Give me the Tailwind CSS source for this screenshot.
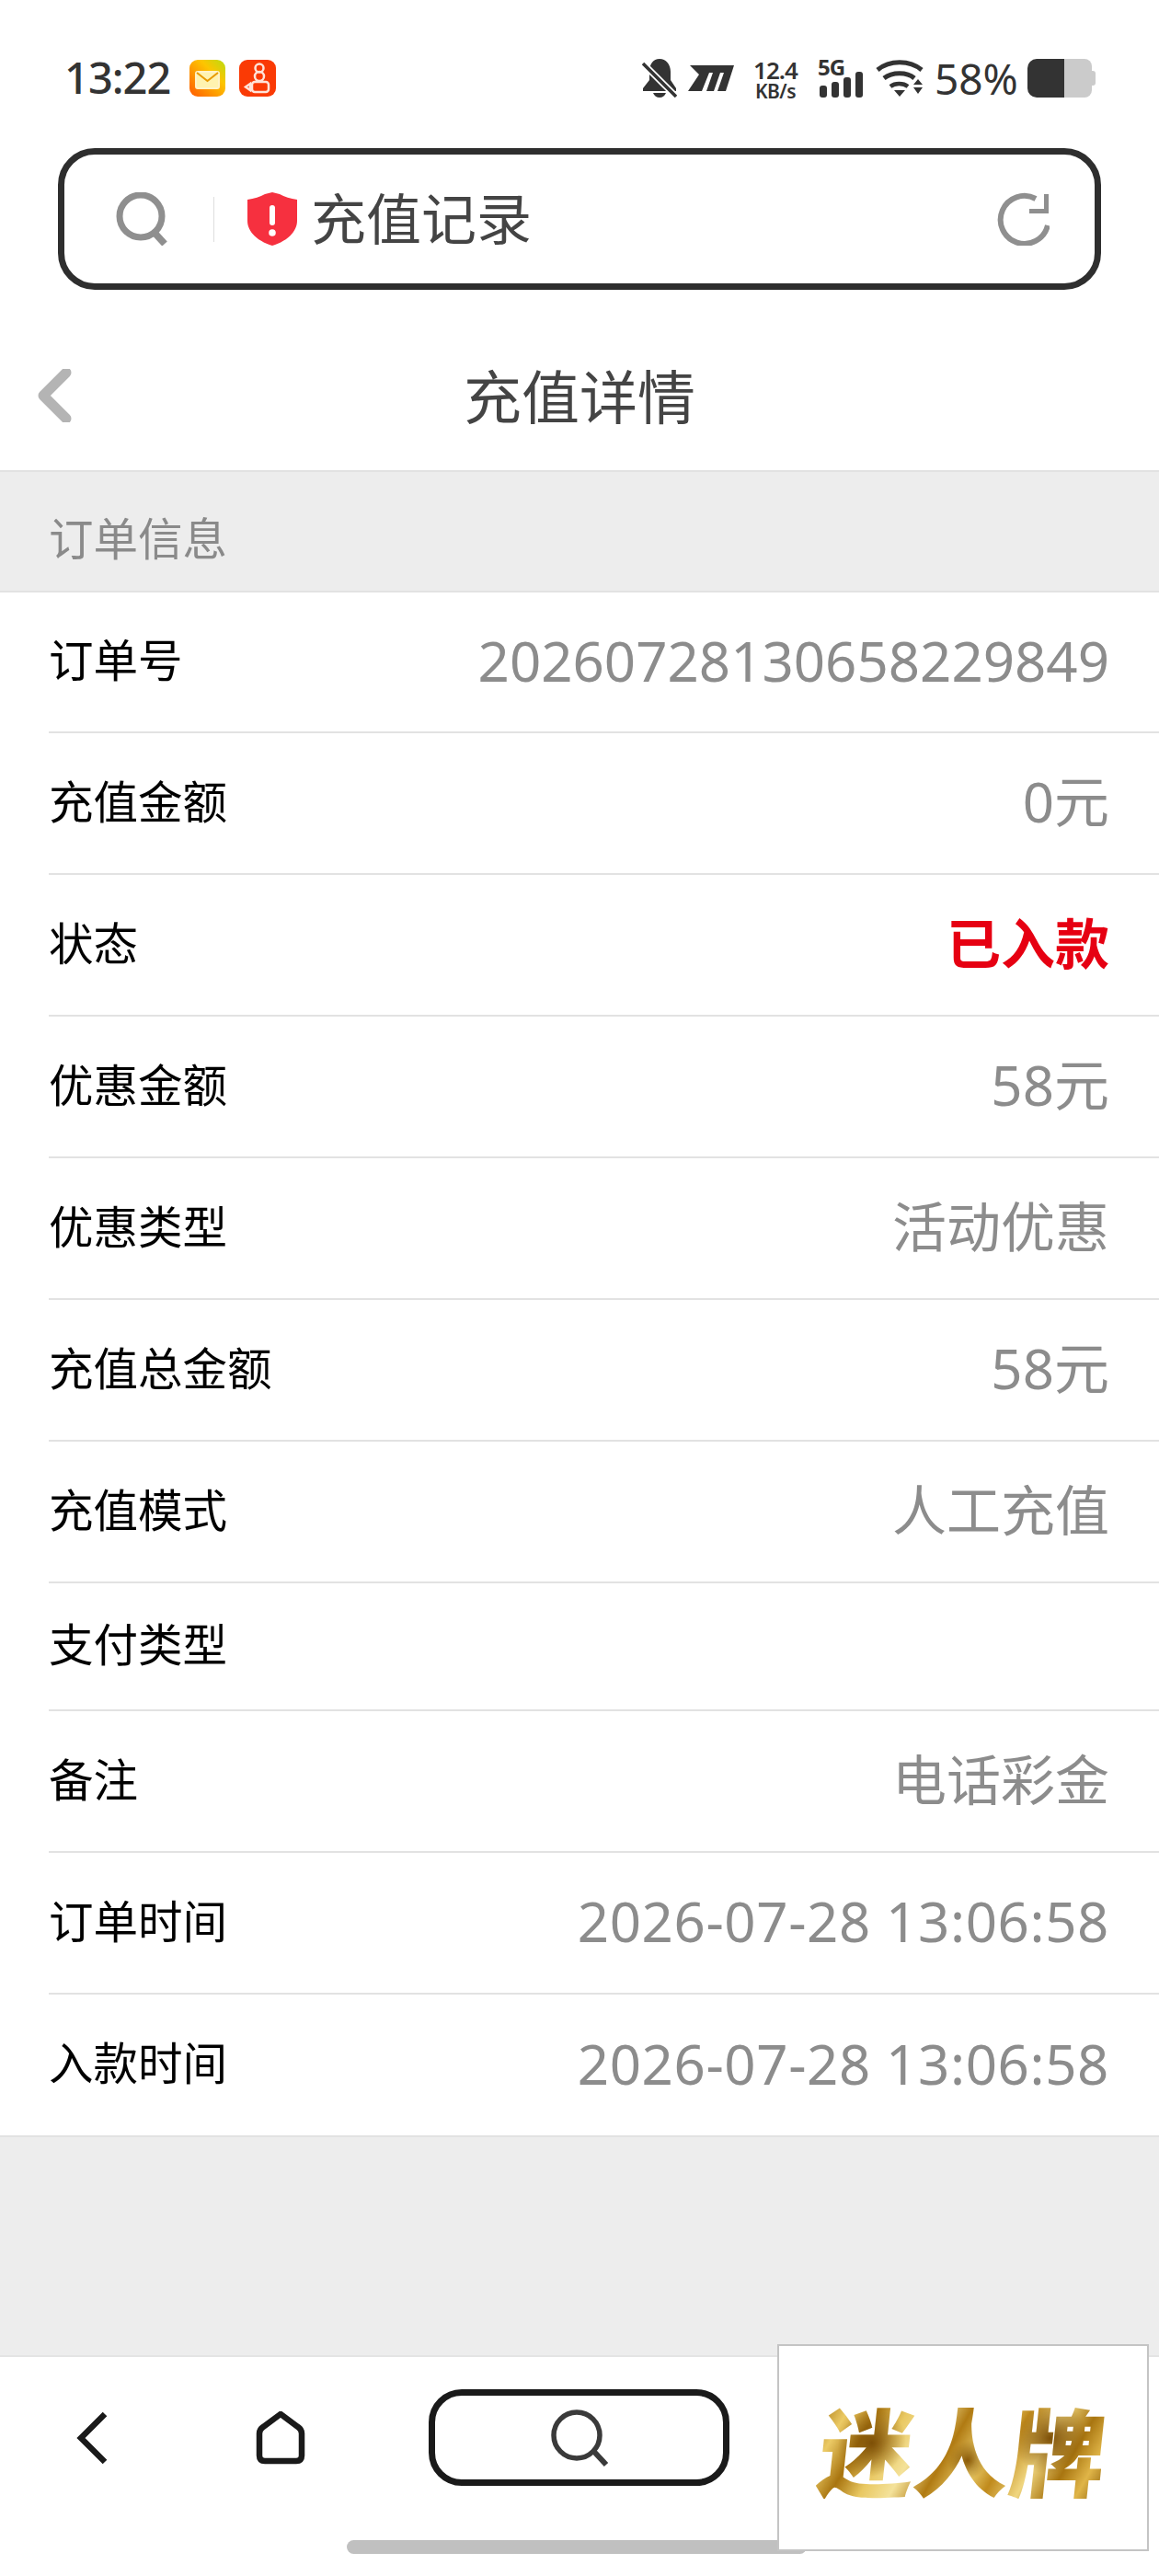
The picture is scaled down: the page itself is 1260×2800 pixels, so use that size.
<!DOCTYPE html>
<html lang="zh-CN">
<head>
    <meta charset="UTF-8">
    <meta name="viewport" content="width=device-width, initial-scale=1.0">
    <title>充值详情</title>
    <script src="https://cdn.jsdelivr.net/npm/@tailwindcss/browser@4"></script>
</head>
<body class="bg-white font-['Noto_Sans','Noto_Sans_CJK_SC',sans-serif]">
<div class="w-[1260px] h-[2800px] flex flex-col relative overflow-hidden">

    <!-- 状态栏 -->
    <div class="h-[161px] shrink-0 pt-[64px] pl-[70px] flex items-start text-[#333333]">
        <span class="text-[47px] leading-[40px] w-[115px] tracking-[-1px] font-medium whitespace-nowrap">13:22</span>
        <svg class="ml-[21px] mt-px" width="39" height="40" viewBox="0 0 39 40">
            <defs><linearGradient id="mail" x1="1" y1="0" x2="0" y2="1"><stop offset="0" stop-color="#b9dc12"/><stop offset=".35" stop-color="#fdc500"/><stop offset="1" stop-color="#ff5a00"/></linearGradient></defs>
            <rect width="39" height="40" rx="9" fill="url(#mail)"/>
            <rect x="7" y="13" width="25" height="18" rx="2" fill="#fff3b0" stroke="#fff3c8" stroke-width="2"/>
            <path d="M8 14l11.500 9L31 14" fill="none" stroke="#e89a00" stroke-width="2"/>
        </svg>
        <svg class="ml-[15px] mt-px" width="40" height="40" viewBox="0 0 40 40">
            <rect width="40" height="40" rx="9" fill="#fa3a05"/>
            <circle cx="22" cy="9" r="4.500" fill="none" stroke="#ffe3d8" stroke-width="2.500"/>
            <circle cx="22" cy="18" r="5" fill="none" stroke="#ffe3d8" stroke-width="2.500"/>
            <rect x="14" y="24" width="18" height="11" rx="3" fill="none" stroke="#ffe3d8" stroke-width="2.500"/>
            <path d="M12 26l-5 3.500 5 3.500z" fill="none" stroke="#ffe3d8" stroke-width="2.500"/>
        </svg>

        <svg class="ml-[398px]" width="38" height="42" viewBox="0 0 38 42">
            <path d="M19 0c-7 0-11 6-11 14v9L1 32v3h36v-3l-6-9V14C31 6 26 0 19 0z" fill="#333"/>
            <path d="M12 37h14c-1 3-4 5-7 5s-6-2-7-5z" fill="#333"/>
            <path d="M0 4l36 36" stroke="#fff" stroke-width="7"/>
            <path d="M1 5l36 36" stroke="#333" stroke-width="3.500"/>
        </svg>
        <svg class="ml-[12px] mt-[7px]" width="50" height="28" viewBox="0 0 50 28">
            <path d="M2 0h48l-9 28h-9l7-20h-4l-7 20h-8l7-20h-4l-8 20H0l12-18z" fill="#333"/>
        </svg>
        <div class="ml-[20px] w-[50px] flex flex-col items-center font-semibold whitespace-nowrap">
            <span class="text-[26px] leading-[24px] tracking-[-1px]">12.4</span>
            <span class="text-[21px] leading-[20px] mt-[1px] tracking-[-0.5px]">KB/s</span>
        </div>
        <div class="ml-[21px] w-[50px] h-[42px] relative">
            <span class="absolute left-0 top-[-3px] text-[24px] leading-[24px] font-bold tracking-[-1px]">5G</span>
            <svg class="absolute left-[2px] top-[14px]" width="47" height="28" viewBox="0 0 47 28">
                <rect x="0" y="15" width="8" height="13" rx="3" fill="#333"/>
                <rect x="13" y="11" width="8" height="17" rx="3" fill="#333"/>
                <rect x="26" y="6" width="8" height="22" rx="3" fill="#333"/>
                <rect x="39" y="0" width="8" height="28" rx="3" fill="#333"/>
            </svg>
        </div>
        <svg class="ml-[13px]" width="52" height="42" viewBox="0 0 52 42">
            <path d="M2 12C15 1 37 1 50 12" fill="none" stroke="#333" stroke-width="5"/>
            <path d="M9 21c9-7 25-7 33 0" fill="none" stroke="#333" stroke-width="5"/>
            <path d="M16 30c5-4 14-4 19 0" fill="none" stroke="#333" stroke-width="4.500"/>
            <path d="M20 34h12l-6 7zM41 28l5-6 5 6zM41 31h10l-5 7z" fill="#333"/>
        </svg>
        <span class="ml-[12px] w-[89px] text-[46px] leading-[42px] whitespace-nowrap">58%</span>
        <div class="ml-[12px] h-[42px] flex items-center">
            <div class="w-[40px] h-full bg-[#333333] rounded-l-[10px]"></div>
            <div class="w-[30px] h-full bg-[#cbcbcb] rounded-r-[8px]"></div>
            <div class="w-[4px] h-[16px] bg-[#cbcbcb] rounded-r-[3px]"></div>
        </div>
    </div>

    <!-- 地址栏 -->
    <div class="h-[154px] shrink-0 mx-[63px] border-[7px] border-[#2e2e2e] rounded-[40px] flex items-center pl-[55px] pr-[48px]">
        <svg width="58" height="58" viewBox="0 0 58 58">
            <circle cx="28" cy="26" r="23" fill="none" stroke="#8f8f8f" stroke-width="7"/>
            <path d="M43 44l11 12" stroke="#8f8f8f" stroke-width="7.500"/>
        </svg>
        <div class="ml-[49px] w-[1px] h-[49px] bg-[#dfdfdf]"></div>
        <svg class="ml-[36px]" width="54" height="58" viewBox="0 0 54 58">
            <path d="M27 0l8 2c5 3 12 5 19 6v23c0 13-13 23-27 27C13 54 0 44 0 31V8c7-1 14-3 19-6z" fill="#f6303f"/>
            <rect x="24" y="14" width="6" height="22" rx="3" fill="#fff"/>
            <circle cx="27" cy="44" r="3.800" fill="#fff"/>
        </svg>
        <span class="ml-[15px] text-[60px] leading-[58px] text-[#444444] whitespace-nowrap">充值记录</span>
        <svg class="ml-auto mr-[1px]" width="58" height="58" viewBox="0 0 58 58">
            <path d="M56 36A26 26 0 1 1 43 7" fill="none" stroke="#8f8f8f" stroke-width="6"/>
            <path d="M57 2v21H36v-5h16V2z" fill="#8f8f8f"/>
        </svg>
    </div>

    <!-- 标题栏 -->
    <div class="h-[196px] shrink-0 flex items-center relative">
        <svg class="absolute left-[40px] top-[86px]" width="38" height="58" viewBox="0 0 38 58">
            <path d="M32 4L7 29l25 25" fill="none" stroke="#b4b4b4" stroke-width="11" stroke-linejoin="round" stroke-linecap="round"/>
        </svg>
        <h1 class="w-full pt-[35px] text-center text-[63px] leading-[70px] text-[#444444]">充值详情</h1>
    </div>

    <!-- 订单信息 -->
    <div class="h-[133px] shrink-0 bg-[#ededed] border-y-2 border-[#e2e2e2] pl-[53px] pt-[42px] text-[48.500px] leading-[60px] text-[#8a8a8a]">订单信息</div>

    <!-- 明细 -->
    <div class="shrink-0 pl-[53px] text-[48.500px] text-black border-b-2 border-[#e2e2e2]">
        <div class="h-[153px] pb-[4px] flex items-center justify-between pr-[54px] border-b-2 border-[#e2e2e2]">
            <span>订单号</span>
            <span class="text-[60px] text-[#8c8c8c]">20260728130658229849</span>
        </div>
        <div class="h-[154px] pb-[4px] flex items-center justify-between pr-[54px] border-b-2 border-[#e2e2e2]">
            <span>充值金额</span>
            <span class="text-[60px] text-[#8c8c8c]">0元</span>
        </div>
        <div class="h-[154px] pb-[4px] flex items-center justify-between pr-[54px] border-b-2 border-[#e2e2e2]">
            <span>状态</span>
            <span class="text-[59px] font-bold text-[#e60012]">已入款</span>
        </div>
        <div class="h-[154px] pb-[4px] flex items-center justify-between pr-[54px] border-b-2 border-[#e2e2e2]">
            <span>优惠金额</span>
            <span class="text-[60px] text-[#8c8c8c]">58元</span>
        </div>
        <div class="h-[154px] pb-[4px] flex items-center justify-between pr-[54px] border-b-2 border-[#e2e2e2]">
            <span>优惠类型</span>
            <span class="text-[59px] text-[#8c8c8c]">活动优惠</span>
        </div>
        <div class="h-[154px] pb-[4px] flex items-center justify-between pr-[54px] border-b-2 border-[#e2e2e2]">
            <span>充值总金额</span>
            <span class="text-[60px] text-[#8c8c8c]">58元</span>
        </div>
        <div class="h-[154px] pb-[4px] flex items-center justify-between pr-[54px] border-b-2 border-[#e2e2e2]">
            <span>充值模式</span>
            <span class="text-[59px] text-[#8c8c8c]">人工充值</span>
        </div>
        <div class="h-[139px] pb-[4px] flex items-center justify-between pr-[54px] border-b-2 border-[#e2e2e2]">
            <span>支付类型</span>
        </div>
        <div class="h-[154px] pb-[4px] flex items-center justify-between pr-[54px] border-b-2 border-[#e2e2e2]">
            <span>备注</span>
            <span class="text-[59px] text-[#8c8c8c]">电话彩金</span>
        </div>
        <div class="h-[154px] pb-[4px] flex items-center justify-between pr-[54px] border-b-2 border-[#e2e2e2]">
            <span>订单时间</span>
            <span class="text-[60px] text-[#8c8c8c] tracking-[0.6px]">2026-07-28 13:06:58</span>
        </div>
        <div class="h-[153px] pb-[4px] flex items-center justify-between pr-[54px]">
            <span>入款时间</span>
            <span class="text-[60px] text-[#8c8c8c] tracking-[0.6px]">2026-07-28 13:06:58</span>
        </div>
    </div>

    <div class="flex-1 bg-[#ededed] border-b-2 border-[#e4e4e4]"></div>

    <!-- 底部导航 -->
    <div class="h-[238px] shrink-0 relative">
        <div class="flex items-center pt-[35px] pl-[83px]">
            <svg width="34" height="58" viewBox="0 0 34 58">
                <path d="M31 3L5 29l26 26" fill="none" stroke="#1a1a1a" stroke-width="6.500"/>
            </svg>
            <svg class="ml-[160px]" width="56" height="58" viewBox="0 0 56 58">
                <path d="M28 3L9 17c-3 2-4 4-4 7v24c0 4 2 6 6 6h34c4 0 6-2 6-6V24c0-3-1-5-4-7z" fill="none" stroke="#1a1a1a" stroke-width="6.500"/>
            </svg>
            <div class="ml-[133px] w-[327px] h-[105px] border-[7px] border-[#1a1a1a] rounded-[36px] flex items-center justify-center">
                <svg width="66" height="64" viewBox="0 0 66 64">
                    <circle cx="30" cy="29" r="25" fill="none" stroke="#3a3a3a" stroke-width="5.500"/>
                    <path d="M49 47l13 14" stroke="#3a3a3a" stroke-width="6"/>
                </svg>
            </div>
        </div>
        <div class="absolute left-[377px] top-[199px] w-[500px] h-[15px] rounded-full bg-[#c0c0c0]"></div>

        <!-- 悬浮广告 -->
        <div class="absolute left-[845px] top-[-14px] w-[404px] h-[225px] bg-white border-2 border-[#c4c4c4] flex items-center justify-center">
            <span class="inline-block -skew-x-6 text-[104px] leading-[110px] font-black whitespace-nowrap font-['Noto_Sans_CJK_SC',sans-serif] text-transparent bg-clip-text bg-[radial-gradient(circle_at_18%_45%,#7d4f06_0%,transparent_14%),radial-gradient(circle_at_52%_62%,#8a5a08_0%,transparent_12%),radial-gradient(circle_at_80%_40%,#7d4f06_0%,transparent_15%),linear-gradient(115deg,#a9750f_0%,#eccb66_9%,#a8740f_18%,#e9c862_27%,#f4e29a_36%,#b07a12_46%,#eccf6e_56%,#c08a1c_64%,#f0d680_74%,#a87510_84%,#e0b548_92%,#8f620c_100%)]">迷人牌</span>
        </div>
    </div>
</div>
</body>
</html>
